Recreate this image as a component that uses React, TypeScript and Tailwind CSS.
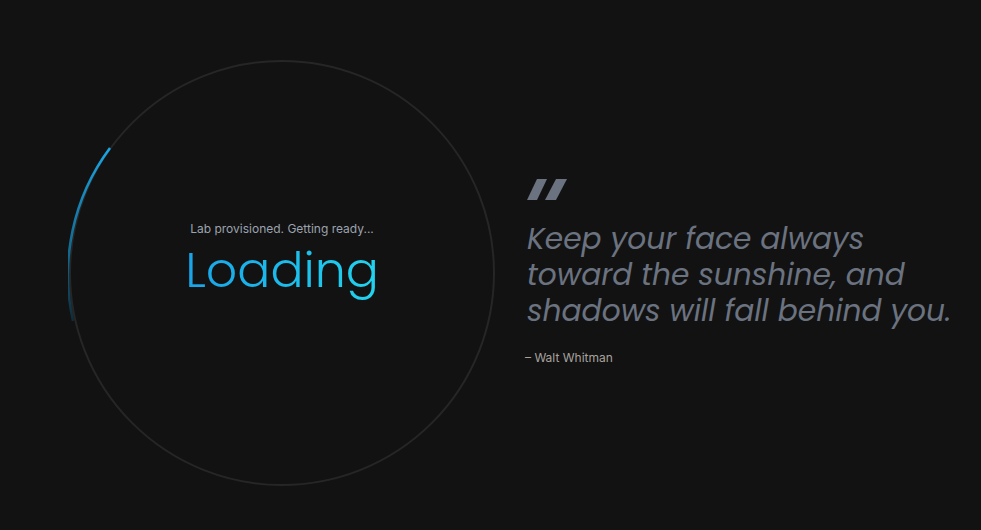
export default function App() {
  return (
    <div
      className="flex h-[530px] w-full items-center bg-[#121212] pl-[68px] pt-[16px]"
      style={{ fontFamily: 'Poppins, Inter, "Noto Sans", sans-serif' }}
    >
      <div className="relative h-[428px] w-[428px] shrink-0">
        <svg width="428" height="428" viewBox="0 0 428 428" className="absolute inset-0">
          <defs>
            <linearGradient id="arc" gradientUnits="userSpaceOnUse" x1="0" y1="89" x2="0" y2="300">
              <stop offset="0" stopColor="#1aa7e6" />
              <stop offset="0.55" stopColor="#1283b8" stopOpacity="0.7" />
              <stop offset="1" stopColor="#0b5a80" stopOpacity="0" />
            </linearGradient>
          </defs>
          <circle cx="214" cy="214" r="212" fill="none" stroke="#262626" strokeWidth="2" />
          <path d="M 42 89 A 212 212 0 0 0 5 262" fill="none" stroke="url(#arc)" strokeWidth="2.5" />
        </svg>
        <div className="absolute inset-0 flex flex-col items-center justify-center pb-[26px]">
          <p className="font-['Inter'] text-[12px] text-[#9ca3af]">Lab provisioned. Getting ready...</p>
          <h1 className="mt-[2px] bg-gradient-to-r from-[#1aa3e8] to-[#22d3ee] bg-clip-text text-[49px] font-light leading-[60px] text-transparent">
            Loading
          </h1>
        </div>
      </div>
      <div className="ml-[31px] flex flex-col">
        <svg width="40" height="21" viewBox="0 0 40 21" className="-mt-[1px] mb-[21px]">
          <polygon points="10,0 20,0 10,21 0,21" fill="#6b7280" />
          <polygon points="29,0 40,0 29,21 18,21" fill="#6b7280" />
        </svg>
        <blockquote className="text-[29.7px] italic leading-[36px] text-[#6b7280]">
          <span className="block">Keep your face always</span>
          <span className="block">toward the sunshine, and</span>
          <span className="block">shadows will fall behind you.</span>
        </blockquote>
        <p className="mt-[20px] -ml-[2px] font-['Inter'] text-[12px] text-[#a8a29e]">– Walt Whitman</p>
      </div>
    </div>
  );
}
